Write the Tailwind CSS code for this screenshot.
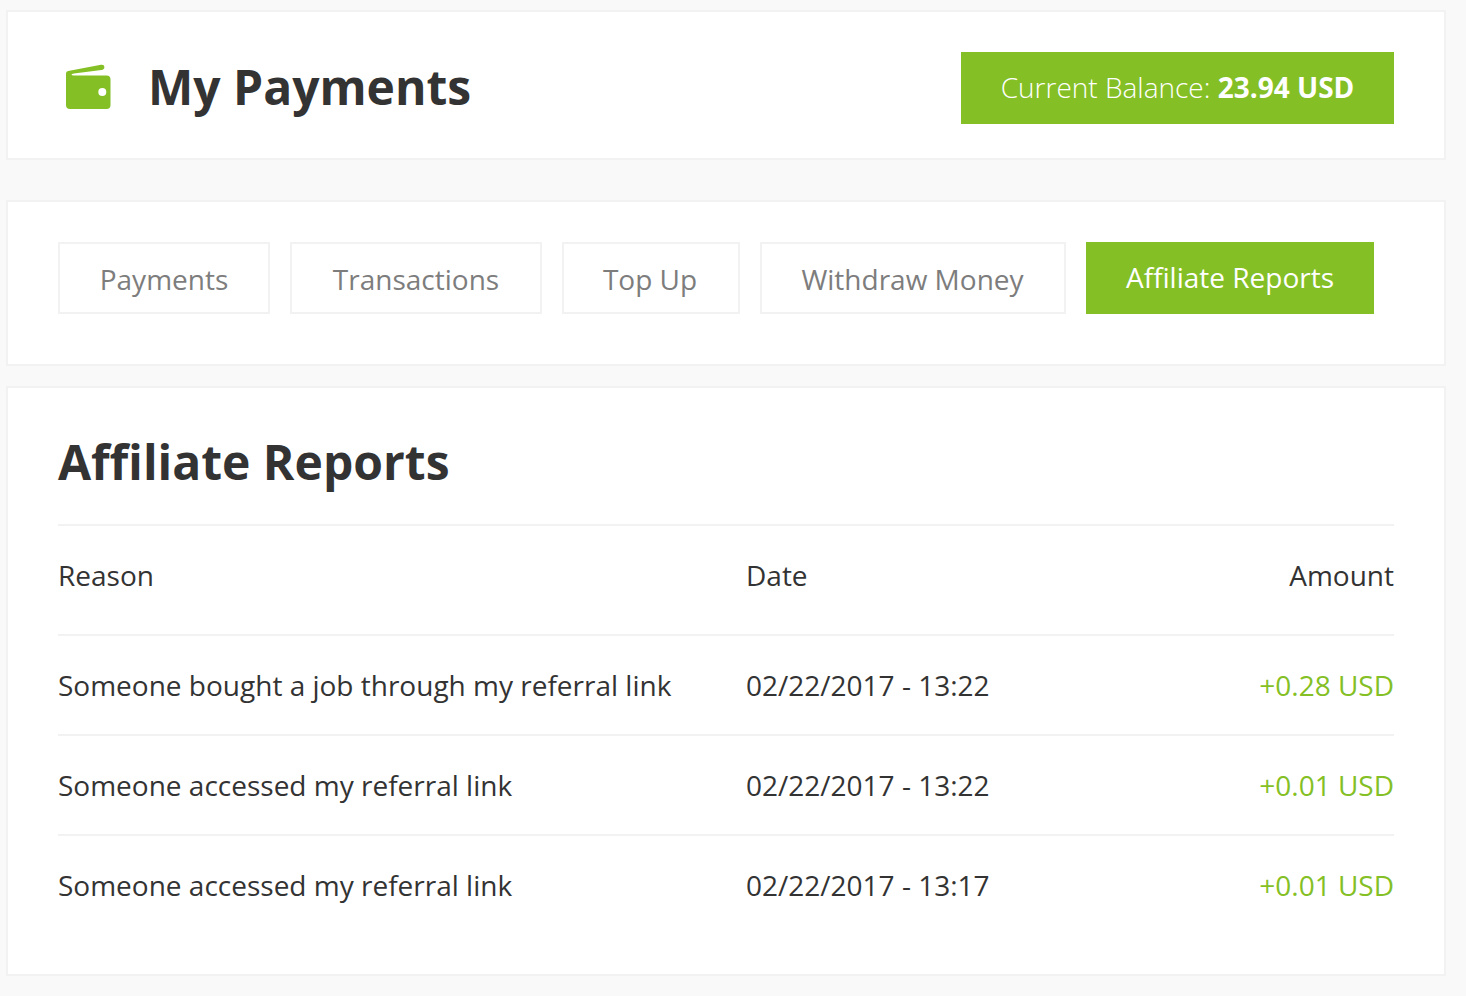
<!DOCTYPE html>
<html lang="en">
<head>
    <meta charset="UTF-8">
    <title>My Payments</title>
    <script src="https://cdn.jsdelivr.net/npm/@tailwindcss/browser@4"></script>
</head>
<body class="bg-[#f9f9f9] font-['Open_Sans',sans-serif] text-[#333333] overflow-hidden">
    <div class="w-[1440px] ml-[6px] pt-[10px] h-[996px]">
        <!-- header -->
        <div class="h-[150px] bg-white border-2 border-[#f2f2f2] pl-[58px] pr-[50px] flex items-center">
            <svg class="w-[45px] h-[45px] mt-[2px] mr-[37px]" viewBox="0 0 45 45">
                <path d="M0 9.5 Q0 7.6 2.2 7.1 L35 0.8 Q38.4 0.4 38.4 3 Q38.4 5.6 35.4 6 L8 9.4 Q5.5 9.8 5.5 10.6 Q5.5 11.5 8 11.5 L40.5 11.5 Q44.5 11.5 44.5 15.5 L44.5 41 Q44.5 45 40.5 45 L4 45 Q0 45 0 41 Z" fill="#84c025"/>
                <circle cx="36.3" cy="28" r="4" fill="#ffffff"/>
            </svg>
            <h1 class="mt-[4px] text-[48px] font-bold leading-none text-[#333333]">My Payments</h1>
            <div class="ml-auto mt-[6px] w-[433px] h-[72px] pb-[2px] bg-[#84c025] text-white text-[28px] font-light flex items-center justify-center">
                <span>Current Balance: <b class="font-bold">23.94 USD</b></span>
            </div>
        </div>

        <!-- tabs -->
        <div class="mt-[40px] h-[166px] bg-white border-2 border-[#f2f2f2] pl-[50px] pt-[40px] flex items-start gap-[20px] text-[28px] text-[#7d7d7d]">
            <a class="w-[212px] h-[72px] pt-[2px] border-2 border-[#f2f2f2] flex items-center justify-center">Payments</a>
            <a class="w-[252px] h-[72px] pt-[2px] border-2 border-[#f2f2f2] flex items-center justify-center">Transactions</a>
            <a class="w-[178px] h-[72px] pt-[2px] pr-[2px] border-2 border-[#f2f2f2] flex items-center justify-center">Top Up</a>
            <a class="w-[306px] h-[72px] pt-[2px] pr-[1px] border-2 border-[#f2f2f2] flex items-center justify-center">Withdraw Money</a>
            <a class="w-[288px] h-[72px] pb-[2px] bg-[#84c025] text-white flex items-center justify-center">Affiliate Reports</a>
        </div>

        <!-- reports -->
        <div class="mt-[20px] h-[590px] bg-white border-2 border-[#f2f2f2] px-[50px] text-[28px]">
            <h2 class="h-[138px] flex items-center pt-[11px] text-[48px] font-bold border-b-2 border-[#f2f2f2]">Affiliate Reports</h2>
            <div class="grid grid-cols-[688px_1fr_auto] h-[110px] pb-[10px] items-center border-b-2 border-[#f2f2f2]">
                <div>Reason</div>
                <div>Date</div>
                <div class="text-right">Amount</div>
            </div>
            <div class="grid grid-cols-[688px_1fr_auto] h-[100px] items-center border-b-2 border-[#f2f2f2]">
                <div>Someone bought a job through my referral link</div>
                <div>02/22/2017 - 13:22</div>
                <div class="text-right text-[#84c025]">+0.28 USD</div>
            </div>
            <div class="grid grid-cols-[688px_1fr_auto] h-[100px] items-center border-b-2 border-[#f2f2f2]">
                <div>Someone accessed my referral link</div>
                <div>02/22/2017 - 13:22</div>
                <div class="text-right text-[#84c025]">+0.01 USD</div>
            </div>
            <div class="grid grid-cols-[688px_1fr_auto] h-[100px] pb-[2px] items-center">
                <div>Someone accessed my referral link</div>
                <div>02/22/2017 - 13:17</div>
                <div class="text-right text-[#84c025]">+0.01 USD</div>
            </div>
        </div>
    </div>
</body>
</html>
